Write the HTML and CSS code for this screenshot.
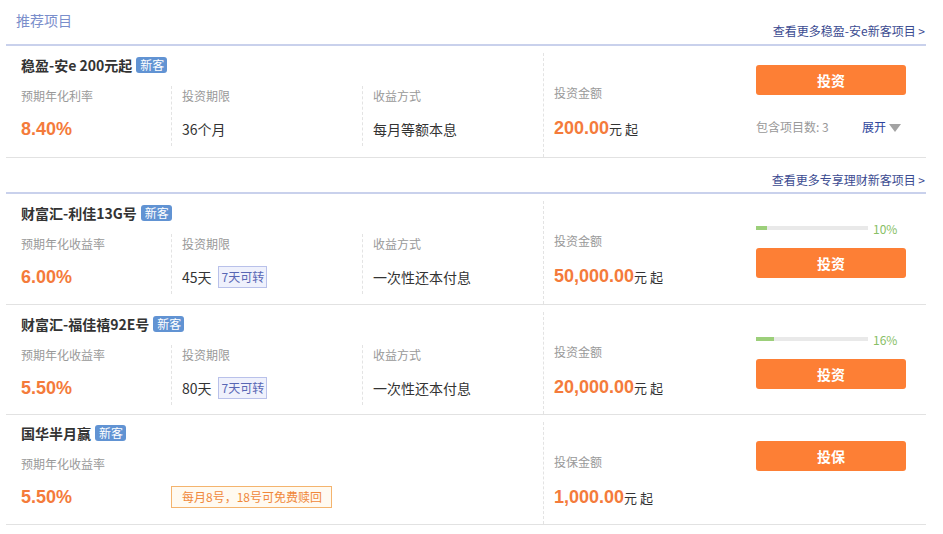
FILE: index.html
```html
<!DOCTYPE html>
<html lang="zh-CN">
<head>
<meta charset="utf-8">
<title>推荐项目</title>
<link rel="stylesheet" href="styles.css">
</head>
<body>
<div class="wrap">
  <div class="sec-head first">
    <div class="sec-title">推荐项目</div>
    <a class="more" href="#">查看更多稳盈-安e新客项目 &gt;</a>
  </div>
  <div class="row r1">
    <div class="main">
      <div class="name">稳盈-安e 200元起<span class="badge">新客</span></div>
      <div class="fields">
        <div class="field"><div class="label">预期年化利率</div><div class="value"><span class="rate">8.40%</span></div></div>
        <div class="field"><div class="label">投资期限</div><div class="value">36个月</div></div>
        <div class="field"><div class="label">收益方式</div><div class="value">每月等额本息</div></div>
      </div>
    </div>
    <div class="amount">
      <div class="label">投资金额</div>
      <div class="value"><span class="num">200.00</span><span class="unit">元 起</span></div>
    </div>
    <div class="action a1">
      <a class="btn" href="#">投资</a>
      <div class="info"><span class="count">包含项目数: 3</span><span class="expand">展开<i class="tri"></i></span></div>
    </div>
  </div>

  <div class="sec-head second">
    <a class="more" href="#">查看更多专享理财新客项目 &gt;</a>
  </div>
  <div class="row r2">
    <div class="main">
      <div class="name">财富汇-利佳13G号<span class="badge">新客</span></div>
      <div class="fields">
        <div class="field"><div class="label">预期年化收益率</div><div class="value"><span class="rate">6.00%</span></div></div>
        <div class="field"><div class="label">投资期限</div><div class="value">45天<span class="tag-blue">7天可转</span></div></div>
        <div class="field"><div class="label">收益方式</div><div class="value">一次性还本付息</div></div>
      </div>
    </div>
    <div class="amount">
      <div class="label">投资金额</div>
      <div class="value"><span class="num">50,000.00</span><span class="unit">元 起</span></div>
    </div>
    <div class="action a2">
      <div class="progress"><div class="track"><div class="fill" style="width:10%"></div></div><span class="pct">10%</span></div>
      <a class="btn" href="#">投资</a>
    </div>
  </div>

  <div class="row">
    <div class="main">
      <div class="name">财富汇-福佳禧92E号<span class="badge">新客</span></div>
      <div class="fields">
        <div class="field"><div class="label">预期年化收益率</div><div class="value"><span class="rate">5.50%</span></div></div>
        <div class="field"><div class="label">投资期限</div><div class="value">80天<span class="tag-blue">7天可转</span></div></div>
        <div class="field"><div class="label">收益方式</div><div class="value">一次性还本付息</div></div>
      </div>
    </div>
    <div class="amount">
      <div class="label">投资金额</div>
      <div class="value"><span class="num">20,000.00</span><span class="unit">元 起</span></div>
    </div>
    <div class="action a2">
      <div class="progress"><div class="track"><div class="fill" style="width:16%"></div></div><span class="pct">16%</span></div>
      <a class="btn" href="#">投资</a>
    </div>
  </div>

  <div class="row r4">
    <div class="main">
      <div class="name">国华半月赢<span class="badge">新客</span></div>
      <div class="fields">
        <div class="field"><div class="label">预期年化收益率</div><div class="value"><span class="rate">5.50%</span></div></div>
        <div class="field plain"><div class="label">&nbsp;</div><div class="value"><span class="tag-orange">每月8号，18号可免费赎回</span></div></div>
      </div>
    </div>
    <div class="amount">
      <div class="label">投保金额</div>
      <div class="value"><span class="num">1,000.00</span><span class="unit">元 起</span></div>
    </div>
    <div class="action a4">
      <a class="btn" href="#">投保</a>
    </div>
  </div>
</div>
</body>
</html>
```

FILE: styles.css
```css
body {
  margin: 0;
  background: #fff;
  color: #333;
  font-family: "Noto Sans CJK SC", "Liberation Sans", sans-serif;
}

.wrap {
  width: 920px;
  margin-left: 6px;
}

.sec-head {
  display: flex;
  justify-content: space-between;
  border-bottom: 2px solid #c9d1ec;
}

.sec-head.first {
  height: 44px;
}

.sec-head.second {
  height: 34px;
  justify-content: flex-end;
}

.sec-title {
  font-size: 14px;
  line-height: 20px;
  color: #7a8ecb;
  padding: 10px 0 0 10px;
}

.more {
  align-self: flex-end;
  font-size: 12px;
  line-height: 20px;
  color: #3b4b91;
  text-decoration: none;
  padding-bottom: 3px;
  margin-right: 1px;
}

.sec-head.second .more {
  padding-bottom: 2px;
}

.row {
  display: flex;
  height: 109px;
  border-bottom: 1px solid #e2e2e2;
}

.row.r1 {
  height: 111px;
}

.row.r2 {
  height: 110px;
}

.main {
  width: 537px;
  flex: none;
}

.name {
  display: flex;
  align-items: center;
  padding: 8px 0 0 15px;
  line-height: 22px;
  font-size: 14px;
  font-weight: bold;
  color: #333;
}

.r4 .name {
  padding-top: 7px;
}

.badge {
  margin-left: 4px;
  height: 16px;
  line-height: 16px;
  padding: 0 3px 0 4px;
  border-radius: 3px;
  background: #6193d3;
  color: #fff;
  font-size: 12px;
  font-weight: normal;
}

.fields {
  display: grid;
  grid-template-columns: 165px 191px 181px;
  margin-top: 10px;
}

.field {
  padding: 0 0 5px 10px;
  border-left: 1px dashed #e3e3e3;
}

.field:first-child {
  padding-left: 15px;
  border-left: none;
}

.field.plain {
  border-left: none;
  padding-left: 0;
}

.label {
  font-size: 12px;
  line-height: 20px;
  color: #999;
}

.value {
  display: flex;
  align-items: center;
  margin-top: 11px;
  height: 24px;
  line-height: 24px;
  font-size: 14px;
  color: #333;
}

.rate {
  font-family: "Liberation Sans", Arial, sans-serif;
  font-size: 18px;
  font-weight: bold;
  color: #f47b3b;
}

.tag-blue {
  margin-left: 6px;
  height: 22px;
  line-height: 20px;
  box-sizing: border-box;
  padding: 0 2px 0 3px;
  border: 1px solid #b9c1ea;
  background: #eff1fc;
  color: #5867b4;
  font-size: 12px;
}

.tag-orange {
  height: 22px;
  line-height: 20px;
  box-sizing: border-box;
  padding: 0 9px 0 10px;
  border: 1px solid #f4b46e;
  background: #fffaf1;
  color: #f0883a;
  font-size: 12px;
}

.amount {
  flex: 1;
  margin-top: 7px;
  padding: 30px 0 0 10px;
  border-left: 1px dashed #e3e3e3;
}

.amount .value {
  margin-top: 13px;
  align-items: baseline;
}

.num {
  font-family: "Liberation Sans", Arial, sans-serif;
  font-size: 18px;
  font-weight: bold;
  color: #f47b3b;
}

.unit {
  font-size: 13px;
  color: #333;
}

.action {
  width: 150px;
  flex: none;
  margin-right: 20px;
}

.action.a1 {
  padding-top: 19px;
}

.action.a2 {
  padding-top: 28px;
}

.action.a4 {
  padding-top: 26px;
}

.btn {
  display: block;
  height: 30px;
  line-height: 30px;
  border-radius: 3px;
  background: #fd7f35;
  color: #fff;
  text-align: center;
  font-size: 14px;
  font-weight: bold;
  text-decoration: none;
}

.info {
  display: flex;
  align-items: center;
  margin-top: 22px;
  font-size: 12px;
  line-height: 20px;
}

.count {
  color: #999;
}

.expand {
  display: flex;
  align-items: center;
  margin-left: auto;
  margin-right: 5px;
  color: #2e449c;
}

.tri {
  width: 0;
  height: 0;
  margin-left: 3px;
  margin-top: 2px;
  border-left: 6.5px solid transparent;
  border-right: 6.5px solid transparent;
  border-top: 8px solid #a3a3a3;
}

.progress {
  display: flex;
  align-items: center;
  height: 12px;
  margin-bottom: 14px;
}

.track {
  width: 112px;
  height: 4px;
  background: #e9e9e9;
}

.fill {
  height: 4px;
  background: #9ccf7a;
}

.pct {
  margin-left: 5px;
  font-size: 12px;
  color: #88c065;
}
```
